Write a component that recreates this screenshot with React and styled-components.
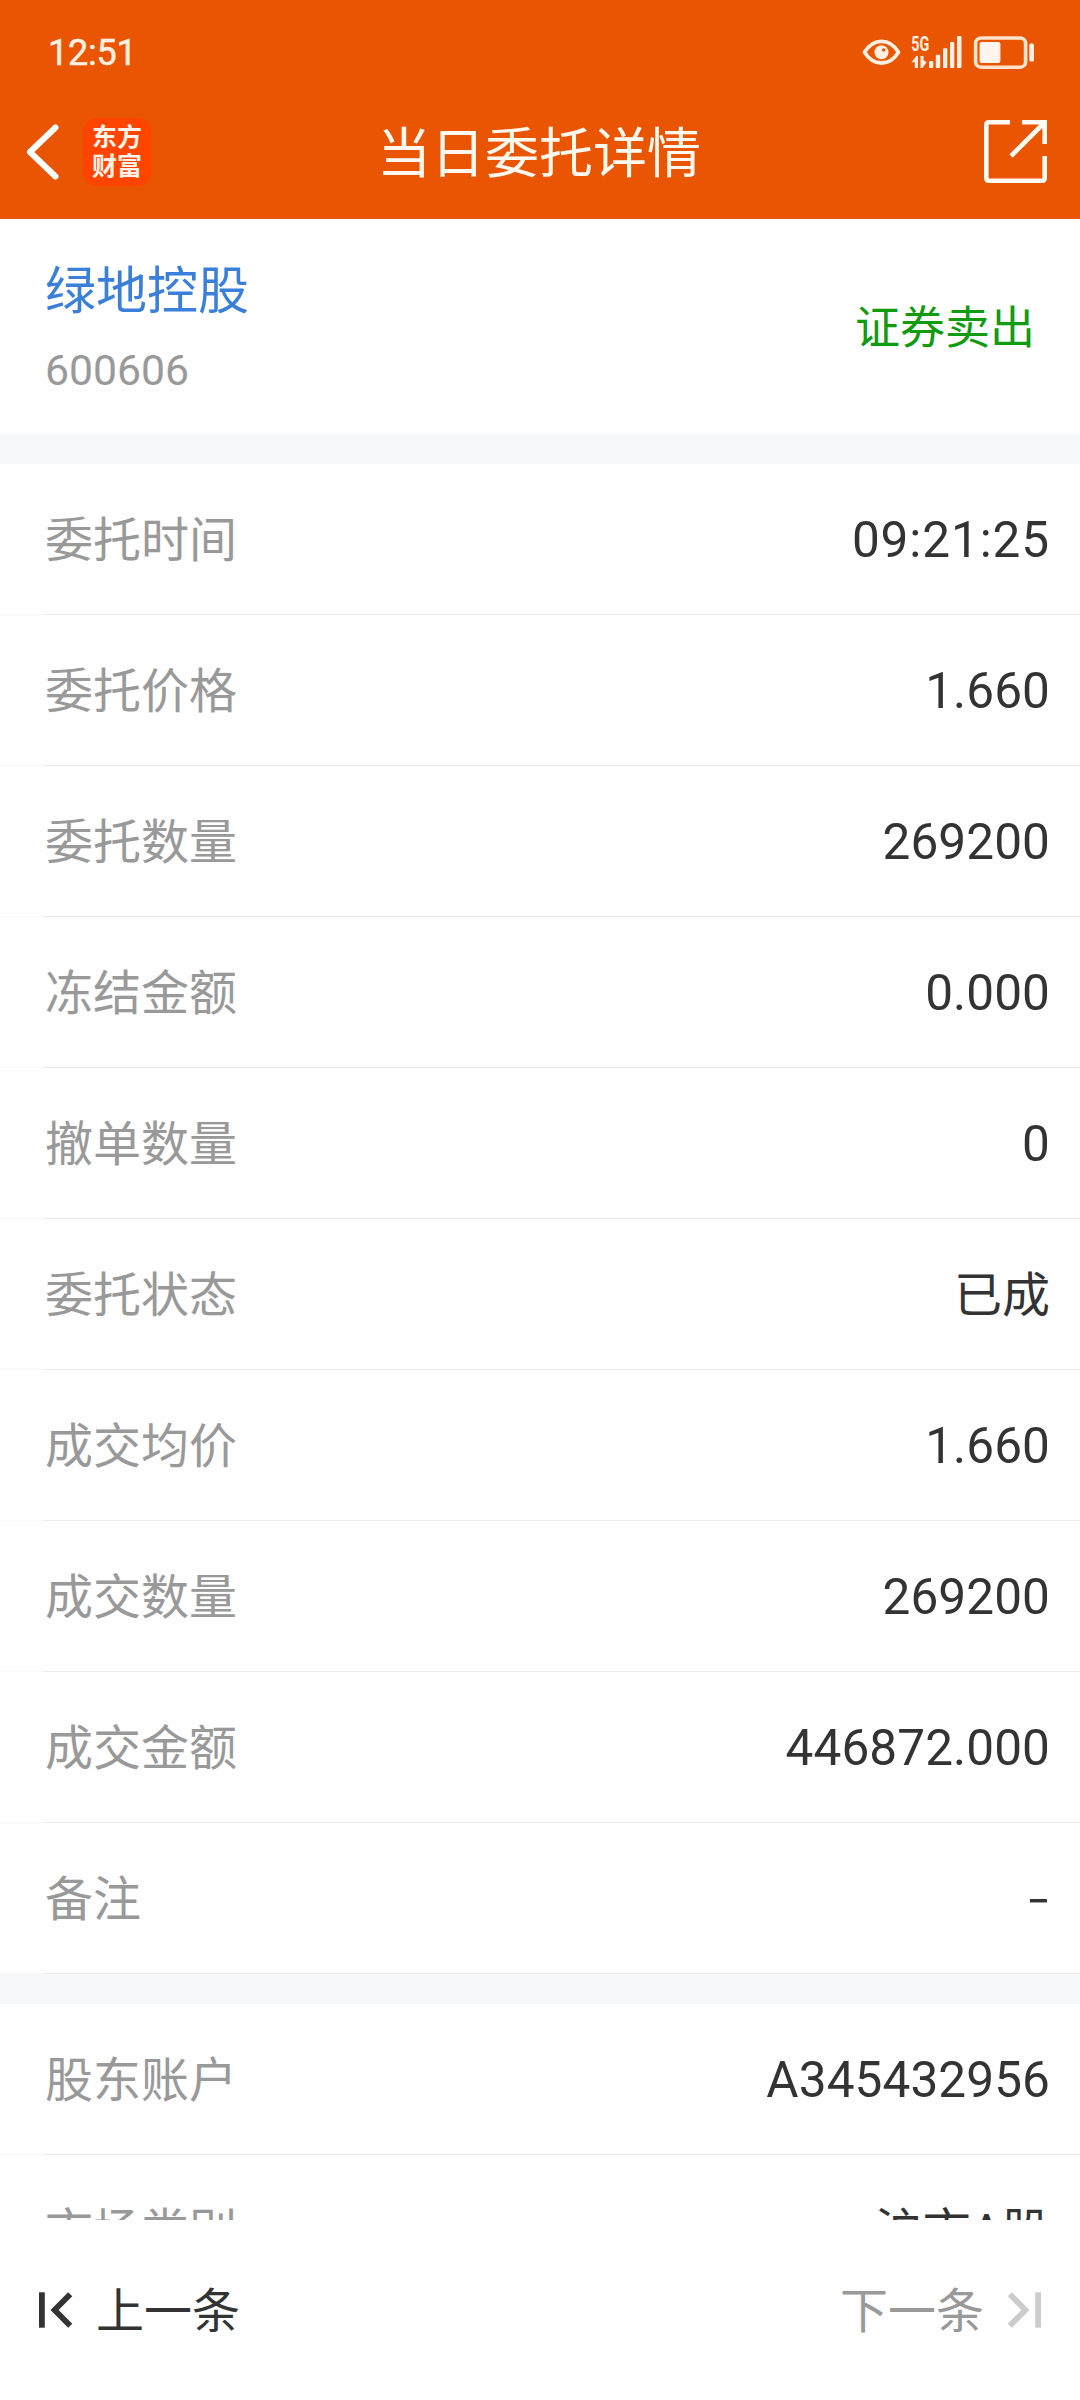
import styled, { createGlobalStyle } from 'styled-components'

const orderInfo = [
    { label: '委托时间', value: '09:21:25', kind: 'time' },
    { label: '委托价格', value: '1.660' },
    { label: '委托数量', value: '269200' },
    { label: '冻结金额', value: '0.000' },
    { label: '撤单数量', value: '0' },
    { label: '委托状态', value: '已成', kind: 'text' },
    { label: '成交均价', value: '1.660' },
    { label: '成交数量', value: '269200' },
    { label: '成交金额', value: '446872.000' },
    { label: '备注', value: '-', kind: 'empty' }
]

const accountInfo = [
    { label: '股东账户', value: 'A345432956' },
    { label: '市场类别', value: '沪市A股', kind: 'text' }
]

function StatusIcons() {
    return (
        <svg width="176" height="36" viewBox="862 34 176 36" fill="#FFF0E2">
            <path d="M864.5 52.2C869 45 875 41.4 881.5 41.4S894 45 898.5 52.2C894 59.4 888 63 881.5 63S869 59.4 864.5 52.2Z" fill="none" stroke="#FFF0E2" strokeWidth="3.8" strokeLinejoin="round" />
            <circle cx="881.5" cy="52.3" r="7" />
            <circle cx="883.6" cy="50" r="1.7" fill="#EA5504" />
            <text x="911.3" y="50.6" fontFamily="Roboto, sans-serif" fontWeight="700" fontSize="19.5" textLength="18" lengthAdjust="spacingAndGlyphs">5G</text>
            <path d="M911.5 62.3L916.3 56H918V68H914.8V62.3Z" />
            <path d="M920.5 56H923.5V60L926.6 62.3L922.5 68H920.5Z" />
            <rect x="929" y="61" width="4.3" height="7" rx="1" />
            <rect x="935.8" y="54.7" width="4.4" height="13.3" rx="1" />
            <rect x="943" y="48.3" width="4.3" height="19.7" rx="1" />
            <rect x="950" y="42" width="4.3" height="26" rx="1" />
            <rect x="957" y="36" width="4.5" height="32" rx="1" />
            <rect x="975.6" y="38" width="50" height="29.2" rx="5.5" fill="none" stroke="#FFE3CC" strokeWidth="3.6" />
            <rect x="979.6" y="42" width="20.8" height="21" rx="2" fill="#FFF5EE" />
            <rect x="1029.3" y="43.6" width="4.7" height="17.8" rx="1.5" />
        </svg>
    )
}

function StepIcon() {
    return (
        <svg width="34" height="36" viewBox="0 0 34 36" fill="none" stroke="currentColor">
            <path d="M2.9 0.3V35.7" strokeWidth="5.8" />
            <path d="M31.2 2.2L15.6 18L31.2 33.8" strokeWidth="5.8" />
        </svg>
    )
}

function InfoList({ items }) {
    return (
        <List>
            {items.map(item => (
                <Row key={item.label}>
                    <Label>{item.label}</Label>
                    <Value $kind={item.kind}>{item.value}</Value>
                </Row>
            ))}
        </List>
    )
}

export default function App() {
    return (
        <Page>
            <GlobalStyle />
            <Header>
                <StatusBar>
                    <Clock>12:51</Clock>
                    <StatusIcons />
                </StatusBar>
                <NavBar>
                    <NavLeft>
                        <svg width="33" height="56" viewBox="0 0 33 56" fill="none" stroke="#FFFFFF" strokeWidth="6" strokeLinecap="round" strokeLinejoin="round">
                            <path d="M29.5 3.5L4 28L29.5 52.5" />
                        </svg>
                        <Logo>东方<br />财富</Logo>
                    </NavLeft>
                    <Title>当日委托详情</Title>
                    <svg width="63" height="63" viewBox="0 0 63 63" fill="none" stroke="#FFFAF2" strokeWidth="4.6">
                        <path d="M26 2.3H5Q2.3 2.3 2.3 5V58Q2.3 60.7 5 60.7H58Q60.7 60.7 60.7 58V36" />
                        <path d="M38 2.3H60.7V24M60 3L27 36" />
                    </svg>
                </NavBar>
            </Header>
            <Stock>
                <div>
                    <StockName>绿地控股</StockName>
                    <StockCode>600606</StockCode>
                </div>
                <Direction>证券卖出</Direction>
            </Stock>
            <Content>
                <Gap />
                <InfoList items={orderInfo} />
                <Gap />
                <InfoList items={accountInfo} />
            </Content>
            <Footer>
                <Prev>
                    <StepIcon />
                    <StepText>上一条</StepText>
                </Prev>
                <Next>
                    <StepText>下一条</StepText>
                    <StepIcon />
                </Next>
            </Footer>
        </Page>
    )
}

const GlobalStyle = createGlobalStyle`
    * {
        box-sizing: border-box;
    }
    body {
        margin: 0;
        background: #FEFEFE;
    }
    svg {
        display: block;
        flex: none;
    }
`
const Page = styled.div`
    width: 1080px;
    height: 2400px;
    display: flex;
    flex-direction: column;
    overflow: hidden;
    background: #FEFEFE;
    font-family: Roboto, 'Noto Sans CJK SC', sans-serif;
    color: #333333;
`
const Header = styled.header`
    height: 219px;
    flex: none;
    background: #EA5504;
`
const StatusBar = styled.div`
    height: 104px;
    padding: 0 42px 0 48px;
    display: flex;
    justify-content: space-between;
    align-items: center;
`
const Clock = styled.div`
    padding-top: 2px;
    font-size: 36px;
    font-weight: 400;
    line-height: 40px;
    letter-spacing: -0.2px;
    color: #FFF0E2;
    -webkit-text-stroke: 0.5px #FFF0E2;
`
const NavBar = styled.div`
    height: 95px;
    padding: 0 33px 0 26px;
    display: grid;
    grid-template-columns: 1fr auto 1fr;
    align-items: center;

        > svg {
            justify-self: end;
        }
`
const NavLeft = styled.div`
    display: flex;
    align-items: center;
    gap: 24px;
`
const Logo = styled.div`
    width: 68px;
    height: 68px;
    padding-top: 3px;
    border-radius: 14px;
    background: #FF4400;
    color: #FFF3EA;
    text-align: center;
    font-family: 'Noto Sans CJK SC', sans-serif;
    font-size: 25px;
    font-weight: 700;
    line-height: 29px;
`
const Title = styled.h1`
    margin: 0;
    padding: 7px 0 0 5px;
    font-size: 54px;
    font-weight: 400;
    line-height: 60px;
    color: #FFF8EE;
`
const Stock = styled.section`
    height: 215px;
    flex: none;
    padding: 43px 45px 0;
    display: flex;
    justify-content: space-between;
`
const StockName = styled.div`
    font-size: 51px;
    line-height: 60px;
    color: #3A7FD9;
`
const StockCode = styled.div`
    margin-top: 18px;
    font-size: 42.7px;
    line-height: 60px;
    color: #999999;
`
const Direction = styled.div`
    margin-top: 37px;
    font-size: 45px;
    line-height: 60px;
    color: #109B10;
`
const Content = styled.main`
    flex: 1;
    min-height: 0;
    overflow: hidden;
`
const Gap = styled.div`
    height: 30px;
    background: #F6F8FA;
`
const List = styled.div`
    display: flex;
    flex-direction: column;
`
const Row = styled.div`
    height: 151px;
    flex: none;
    padding: 0 30px 0 45px;
    display: flex;
    justify-content: space-between;
    align-items: center;
    border-bottom: 1px solid;
    border-image: linear-gradient(to right, #F9F9F9 45px, #EBEBEB 45px) 1;
`
const Label = styled.div`
    padding-top: 3px;
    font-size: 48px;
    line-height: 60px;
    color: #999999;
`
const valueStyles = {
    number: { font: 'Roboto', size: 49.5, spacing: 0.1, top: 2 },
    time: { font: 'Roboto', size: 49.5, spacing: 0.9, top: 2 },
    text: { font: 'Roboto', size: 48, spacing: 0, top: 4 },
    empty: { font: 'Inter', size: 56, spacing: -1, top: 0 }
}

const pick = key => ({ $kind = 'number' }) => valueStyles[$kind][key]

const Value = styled.div`
    padding-top: ${pick('top')}px;
    font-family: ${pick('font')}, 'Noto Sans CJK SC', sans-serif;
    font-size: ${pick('size')}px;
    font-weight: ${({ $kind }) => $kind === 'empty' ? 300 : 400};
    line-height: 60px;
    letter-spacing: ${pick('spacing')}px;
`
const Footer = styled.footer`
    height: 180px;
    flex: none;
    padding: 0 39px;
    display: flex;
    justify-content: space-between;
    align-items: center;
`
const StepText = styled.span`
    padding-top: 3px;
    font-size: 48px;
    line-height: 60px;
`
const Prev = styled.div`
    display: flex;
    align-items: center;
    gap: 23px;
`
const Next = styled.div`
    display: flex;
    align-items: center;
    gap: 23px;
    color: #999999;

        svg {
            color: #CCCCCC;
            transform: rotate(180deg);
        }
`
